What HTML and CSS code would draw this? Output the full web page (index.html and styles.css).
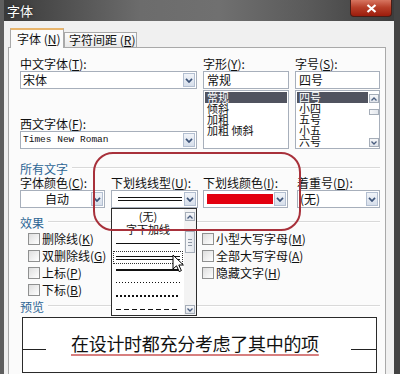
FILE: index.html
```html
<!DOCTYPE html>
<html lang="zh-CN">
<head>
    <meta charset="UTF-8">
    <meta name="viewport" content="width=device-width, initial-scale=1.0">
    <title>字体</title>
    <link rel="stylesheet" href="styles.css">
</head>
<body>
<div class="window">
    <div class="titlebar">
        <span class="title">字体</span>
        <span class="close">
            <svg width="11" height="9" viewBox="0 0 11 9"><path d="M1.5 1 L9.5 8 M9.5 1 L1.5 8" stroke="#fff" stroke-width="2.2" fill="none"/></svg>
        </span>
    </div>

    <div class="tabs">
        <div class="tab active">字体 (<u>N</u>)</div>
        <div class="tab">字符间距 (<u>R</u>)</div>
    </div>

    <div class="panel">
        <div class="top">
            <div class="col">
                <span class="lbl">中文字体(<u>T</u>):</span>
                <div class="combo">
                    <span class="val">宋体</span>
                    <span class="arrow"><svg width="8" height="5" viewBox="0 0 8 5"><path d="M1 0.8 L4 4 L7 0.8" stroke="#3d5479" stroke-width="1.7" fill="none"/></svg></span>
                </div>
                <span class="lbl second">西文字体(<u>F</u>):</span>
                <div class="combo">
                    <span class="val mono">Times New Roman</span>
                    <span class="arrow"><svg width="8" height="5" viewBox="0 0 8 5"><path d="M1 0.8 L4 4 L7 0.8" stroke="#3d5479" stroke-width="1.7" fill="none"/></svg></span>
                </div>
            </div>
            <div class="col">
                <span class="lbl">字形(<u>Y</u>):</span>
                <div class="edit">常规</div>
                <ul class="list">
                    <li class="sel">常规</li>
                    <li>倾斜</li>
                    <li>加粗</li>
                    <li>加粗 倾斜</li>
                </ul>
            </div>
            <div class="col">
                <span class="lbl">字号(<u>S</u>):</span>
                <div class="edit">四号</div>
                <div class="list scroll">
                    <ul>
                        <li class="sel">四号</li>
                        <li>小四</li>
                        <li>五号</li>
                        <li>小五</li>
                        <li>六号</li>
                    </ul>
                    <div class="vscroll">
                        <span class="sbtn"><svg width="6" height="4" viewBox="0 0 6 4"><path d="M0.5 3.5 L3 1 L5.5 3.5" stroke="#4a5d7e" stroke-width="1.3" fill="none"/></svg></span>
                        <span class="thumb small"></span>
                        <span class="spacer"></span>
                        <span class="sbtn"><svg width="6" height="4" viewBox="0 0 6 4"><path d="M0.5 0.5 L3 3 L5.5 0.5" stroke="#4a5d7e" stroke-width="1.3" fill="none"/></svg></span>
                    </div>
                </div>
            </div>
        </div>

        <div class="group first">所有文字</div>
        <div class="mid">
            <div class="cell">
                <span class="lbl">字体颜色(<u>C</u>):</span>
                <div class="combo w85">
                    <span class="val center">自动</span>
                    <span class="arrow"><svg width="8" height="5" viewBox="0 0 8 5"><path d="M1 0.8 L4 4 L7 0.8" stroke="#3d5479" stroke-width="1.7" fill="none"/></svg></span>
                </div>
            </div>
            <div class="cell">
                <span class="lbl">下划线线型(<u>U</u>):</span>
                <div class="combo w87">
                    <span class="val"><span class="uline double"></span></span>
                    <span class="arrow"><svg width="8" height="5" viewBox="0 0 8 5"><path d="M1 0.8 L4 4 L7 0.8" stroke="#3d5479" stroke-width="1.7" fill="none"/></svg></span>

                    <div class="droplist">
                        <div class="dl-items">
                            <div class="dl-item h14">(无)</div>
                            <div class="dl-item h12">字下加线</div>
                            <div class="dl-item h16"><span class="uline single"></span></div>
                            <div class="dl-item h13 focus"><span class="uline double"></span></div>
                            <div class="dl-item h12"><span class="uline thick"></span></div>
                            <div class="dl-item h13"><span class="uline dotted"></span></div>
                            <div class="dl-item h14"><span class="uline dotted heavy"></span></div>
                            <div class="dl-item h12"><span class="uline dashed"></span></div>
                        </div>
                        <div class="vscroll drop">
                            <span class="sbtn"><svg width="6" height="4" viewBox="0 0 6 4"><path d="M0.5 3.5 L3 1 L5.5 3.5" stroke="#4a5d7e" stroke-width="1.3" fill="none"/></svg></span>
                            <span class="thumb"><i></i><i></i><i></i></span>
                            <span class="spacer"></span>
                            <span class="sbtn"><svg width="6" height="4" viewBox="0 0 6 4"><path d="M0.5 0.5 L3 3 L5.5 0.5" stroke="#4a5d7e" stroke-width="1.3" fill="none"/></svg></span>
                        </div>
                        <svg class="cursor" width="13" height="19" viewBox="0 0 13 19">
                            <path d="M1 1 L1 15 L4.5 11.8 L7.2 17.6 L9.4 16.6 L6.8 11 L11.4 11 Z" fill="#fff" stroke="#000" stroke-width="1" stroke-linejoin="round"/>
                        </svg>
                    </div>
                </div>
            </div>
            <div class="cell">
                <span class="lbl">下划线颜色(<u>I</u>):</span>
                <div class="combo w85">
                    <span class="val"><span class="swatch"></span></span>
                    <span class="arrow"><svg width="8" height="5" viewBox="0 0 8 5"><path d="M1 0.8 L4 4 L7 0.8" stroke="#3d5479" stroke-width="1.7" fill="none"/></svg></span>
                </div>
            </div>
            <div class="cell">
                <span class="lbl">着重号(<u>D</u>):</span>
                <div class="combo w83">
                    <span class="val">(无)</span>
                    <span class="arrow"><svg width="8" height="5" viewBox="0 0 8 5"><path d="M1 0.8 L4 4 L7 0.8" stroke="#3d5479" stroke-width="1.7" fill="none"/></svg></span>
                </div>
            </div>
        </div>

        <div class="group effects-title">效果</div>
        <div class="effects">
            <label class="check"><span class="box"></span>删除线(<u>K</u>)</label>
            <label class="check"><span class="box"></span>小型大写字母(<u>M</u>)</label>
            <label class="check"><span class="box"></span>双删除线(<u>G</u>)</label>
            <label class="check"><span class="box"></span>全部大写字母(<u>A</u>)</label>
            <label class="check"><span class="box"></span>上标(<u>P</u>)</label>
            <label class="check"><span class="box"></span>隐藏文字(<u>H</u>)</label>
            <label class="check"><span class="box"></span>下标(<u>B</u>)</label>
        </div>

        <div class="group">预览</div>
        <div class="preview">
            <span class="pv-line"></span>
            <span class="pv-text">在设计时都充分考虑了其中的项</span>
            <span class="pv-fill"></span>
            <span class="pv-line right"></span>
        </div>

        <div class="mark"></div>
    </div>
</div>
</body>
</html>
```

FILE: styles.css
```css
* {
    box-sizing: border-box;
}
html, body {
    margin: 0;
    padding: 0;
}
body {
    width: 400px;
    height: 374px;
    overflow: hidden;
    background-color: #4a4a4a;
    font-family: "Noto Sans CJK SC", "Liberation Sans", sans-serif;
    font-size: 12px;
    color: #111;
}
u {
    text-decoration: underline;
    text-underline-offset: 1px;
}
.window {
    width: 400px;
    height: 374px;
    border-left: 4px solid #5f5f5f;
    border-right: 6px solid #444;
    background-color: #f0f0f0;
    display: flex;
    flex-direction: column;
}

/* title bar */
.titlebar {
    height: 21px;
    flex: none;
    display: flex;
    justify-content: space-between;
    align-items: flex-start;
    background: linear-gradient(90deg, #3a3a3a 0%, #6c6c6c 35%, #707070 55%, #5a5a5a 78%, #3d3d3d 100%);
}
.title {
    color: #fff;
    font-size: 13px;
    line-height: 22px;
    padding-left: 3px;
    text-shadow: 0 0 3px #222;
}
.close {
    width: 42px;
    height: 17px;
    margin-right: 2px;
    display: flex;
    align-items: center;
    justify-content: center;
    background: linear-gradient(#d77560, #b8402a 45%, #9c1c0c);
    border: 1px solid #4a1d16;
    border-top: none;
    border-radius: 0 0 4px 4px;
}

/* tabs */
.tabs {
    height: 26px;
    flex: none;
    display: flex;
    align-items: flex-end;
    padding-left: 6px;
}
.tab {
    width: 73px;
    height: 15px;
    padding-left: 4px;
    border: 1px solid #a9a9a9;
    border-bottom: none;
    background: linear-gradient(#fcfcfc, #e8e8e8);
    line-height: 14px;
    white-space: nowrap;
}
.tab.active {
    width: 54px;
    height: 20px;
    padding-left: 6px;
    margin-bottom: -1px;
    border-top: 2px solid #e8b56c;
    background: #fbfbfb;
    line-height: 17px;
    position: relative;
    z-index: 1;
}

/* panel */
.panel {
    position: relative;
    margin-left: 4px;
    width: 378px;
    height: 340px;
    flex: none;
    border: 1px solid #a9a9a9;
    background-color: #fbfbfb;
    padding: 8px 5px 0 11px;
}
.lbl {
    display: block;
    height: 15px;
    line-height: 15px;
    white-space: nowrap;
}
.lbl.second {
    margin-top: 27px;
}
.top {
    display: grid;
    grid-template-columns: 177px 86px 85px;
    column-gap: 6px;
}
.combo, .edit {
    position: relative;
    height: 18px;
    border: 1px solid #a7afbb;
    background-color: #fff;
    display: flex;
    align-items: center;
}
.edit {
    padding-left: 3px;
    line-height: 16px;
}
.val {
    flex: 1;
    padding-left: 2px;
    line-height: 16px;
    white-space: nowrap;
    display: flex;
    align-items: center;
}
.val.center {
    justify-content: center;
}
.val.mono {
    font-family: "Liberation Mono", monospace;
    font-size: 9.5px;
}
.arrow {
    width: 12px;
    height: 14px;
    margin-right: 1px;
    border: 1px solid #b3bfd1;
    background: linear-gradient(#f1f4f9, #d6deea);
    display: flex;
    align-items: center;
    justify-content: center;
}
.list {
    margin: 1px 0 0;
    padding: 1px 1px 0;
    height: 59px;
    border: 1px solid #a7afbb;
    background-color: #fff;
    list-style: none;
    overflow: hidden;
}
.list ul {
    margin: 0;
    padding: 0;
    list-style: none;
    flex: 1;
}
.list li {
    height: 11px;
    font-size: 11px;
    line-height: 11px;
    padding-left: 2px;
    white-space: nowrap;
    overflow: hidden;
}
.list li.sel {
    background-color: #50535f;
    color: #fff;
}
.list.scroll {
    display: flex;
    padding-right: 0;
}

/* scrollbars */
.vscroll {
    width: 11px;
    display: flex;
    flex-direction: column;
    align-items: center;
    padding: 2px 0 1px;
}
.sbtn {
    width: 10px;
    height: 9px;
    border: 1px solid #a5adb8;
    background: linear-gradient(#f6f7f9, #dfe3ea);
    display: flex;
    align-items: center;
    justify-content: center;
}
.thumb {
    width: 10px;
    height: 22px;
    margin-top: 11px;
    border: 1px solid #a5adb8;
    background: linear-gradient(90deg, #f6f7f9, #e2e6ec);
    display: flex;
    flex-direction: column;
    justify-content: center;
    align-items: center;
    gap: 2px;
}
.thumb.small {
    height: 6px;
    margin-top: 6px;
}
.thumb i {
    width: 4px;
    border-top: 1px solid #8d96a4;
}
.spacer {
    flex: 1;
}

/* groups */
.group {
    display: flex;
    align-items: center;
    height: 16px;
    color: #2d6595;
    white-space: nowrap;
}
.group::after {
    content: "";
    flex: 1;
    margin-left: 4px;
    border-top: 1px solid #d9d9d9;
    border-bottom: 1px solid #fff;
}
.group.first {
    margin-top: 11px;
}
.group.effects-title {
    margin-top: 6px;
}
.mid {
    display: grid;
    grid-template-columns: 91px 92px 94px 83px;
}
.mid .lbl {
    height: 14px;
    line-height: 14px;
}
.w85 { width: 85px; }
.w87 { width: 87px; }
.w83 { width: 83px; }
.val .swatch {
    width: 66px;
    height: 10px;
    margin-left: 1px;
    background-color: #e3000f;
}

/* underline samples */
.uline {
    display: block;
    width: 64px;
    margin-left: 4px;
}
.uline.single {
    border-top: 1px solid #111;
}
.uline.double {
    height: 4px;
    border-top: 1px solid #111;
    border-bottom: 1px solid #111;
}
.uline.thick {
    border-top: 2px solid #111;
}
.uline.dotted {
    height: 1px;
    background-image: repeating-linear-gradient(90deg, #111 0 1px, transparent 1px 3px);
}
.uline.dotted.heavy {
    height: 2px;
    background-image: repeating-linear-gradient(90deg, #111 0 2px, transparent 2px 4px);
}
.uline.dashed {
    height: 1px;
    background-image: repeating-linear-gradient(90deg, #111 0 5px, transparent 5px 8px);
}

/* open dropdown */
.droplist {
    position: absolute;
    left: -1px;
    top: 17px;
    width: 86px;
    height: 108px;
    border: 1px solid #2c2c2c;
    background-color: #fff;
    display: flex;
    z-index: 2;
}
.dl-items {
    flex: 1;
    padding: 0 1px;
}
.dl-item {
    display: flex;
    align-items: center;
    justify-content: center;
    font-size: 11px;
    line-height: 12px;
    white-space: nowrap;
    overflow: hidden;
}
.dl-item .uline {
    margin-left: 0;
}
.dl-item.focus {
    border: 1px dotted #333;
}
.h12 { height: 12px; }
.h13 { height: 13px; }
.h14 { height: 14px; }
.h16 { height: 16px; }
.vscroll.drop {
    width: 12px;
    padding: 3px 0 1px;
    background-color: #f3f3f3;
}
.vscroll.drop .thumb {
    margin-top: 10px;
}
.cursor {
    position: absolute;
    left: 60px;
    top: 45px;
}

/* effects */
.effects {
    display: grid;
    grid-template-columns: 174px 1fr;
    grid-auto-rows: 17px;
    padding-left: 8px;
}
.check {
    display: flex;
    align-items: center;
    white-space: nowrap;
}
.box {
    width: 12px;
    height: 12px;
    margin-right: 2px;
    border: 1px solid #8f9090;
    background: linear-gradient(135deg, #dedede, #fff);
}

/* preview */
.preview {
    margin: 3px 0 0 2px;
    width: 355px;
    height: 56px;
    border: 1px solid #2a2a2a;
    background-color: #fff;
    display: flex;
    align-items: flex-start;
}
.pv-line {
    width: 23px;
    margin-top: 31px;
    border-top: 1px solid #222;
}
.pv-line.right {
    width: 25px;
}
.pv-text {
    margin-left: 25px;
    margin-top: 15px;
    font-size: 18px;
    line-height: 20px;
    letter-spacing: -0.3px;
    white-space: nowrap;
    color: #111;
    text-decoration: underline;
    text-decoration-color: #d77f7f;
    text-decoration-thickness: 2px;
    text-underline-offset: 3px;
}
.pv-fill {
    flex: 1;
}

/* red annotation */
.mark {
    position: absolute;
    left: 84px;
    top: 104px;
    width: 208px;
    height: 79px;
    border: 2px solid #a8313b;
    border-radius: 20px;
    z-index: 3;
    pointer-events: none;
}
```
